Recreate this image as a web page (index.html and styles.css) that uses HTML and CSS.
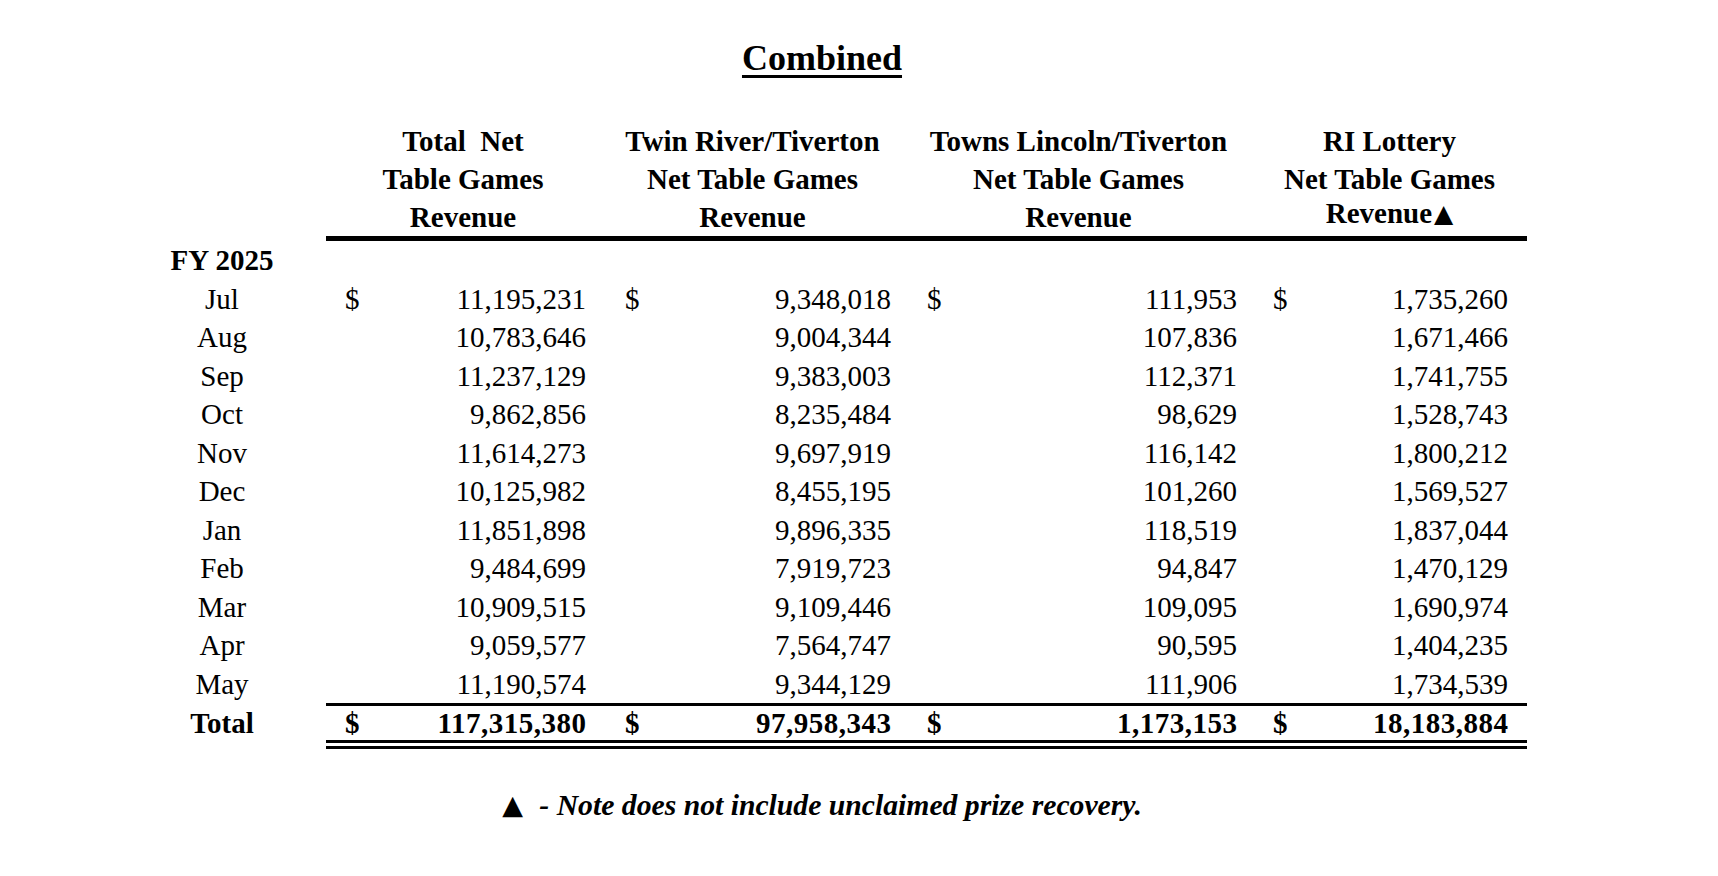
FILE: index.html
```html
<!DOCTYPE html>
<html lang="en">
<head>
<meta charset="utf-8">
<title>Combined</title>
<link rel="stylesheet" href="styles.css">
</head>
<body>
<div class="page">
  <h1 class="title"><span class="title-text">Combined</span></h1>

  <div class="table">
    <div class="lbl hdr-lbl"></div>
    <div class="hdr c1"><div>Total&nbsp; Net</div><div>Table Games</div><div>Revenue</div></div>
    <div class="hdr c2"><div>Twin River/Tiverton</div><div>Net Table Games</div><div>Revenue</div></div>
    <div class="hdr c3"><div>Towns Lincoln/Tiverton</div><div>Net Table Games</div><div>Revenue</div></div>
    <div class="hdr c4"><div>RI Lottery</div><div>Net Table Games</div><div class="rev-up">Revenue<span class="tri">▲</span></div></div>

    <div class="lbl fy">FY 2025</div>
    <div class="cell c1"></div><div class="cell c2"></div><div class="cell c3"></div><div class="cell c4"></div>

    <div class="lbl">Jul</div>
    <div class="cell c1"><span class="cur">$</span><span class="num">11,195,231</span></div>
    <div class="cell c2"><span class="cur">$</span><span class="num">9,348,018</span></div>
    <div class="cell c3"><span class="cur">$</span><span class="num">111,953</span></div>
    <div class="cell c4"><span class="cur">$</span><span class="num">1,735,260</span></div>

    <div class="lbl">Aug</div>
    <div class="cell c1"><span class="num">10,783,646</span></div>
    <div class="cell c2"><span class="num">9,004,344</span></div>
    <div class="cell c3"><span class="num">107,836</span></div>
    <div class="cell c4"><span class="num">1,671,466</span></div>

    <div class="lbl">Sep</div>
    <div class="cell c1"><span class="num">11,237,129</span></div>
    <div class="cell c2"><span class="num">9,383,003</span></div>
    <div class="cell c3"><span class="num">112,371</span></div>
    <div class="cell c4"><span class="num">1,741,755</span></div>

    <div class="lbl">Oct</div>
    <div class="cell c1"><span class="num">9,862,856</span></div>
    <div class="cell c2"><span class="num">8,235,484</span></div>
    <div class="cell c3"><span class="num">98,629</span></div>
    <div class="cell c4"><span class="num">1,528,743</span></div>

    <div class="lbl">Nov</div>
    <div class="cell c1"><span class="num">11,614,273</span></div>
    <div class="cell c2"><span class="num">9,697,919</span></div>
    <div class="cell c3"><span class="num">116,142</span></div>
    <div class="cell c4"><span class="num">1,800,212</span></div>

    <div class="lbl">Dec</div>
    <div class="cell c1"><span class="num">10,125,982</span></div>
    <div class="cell c2"><span class="num">8,455,195</span></div>
    <div class="cell c3"><span class="num">101,260</span></div>
    <div class="cell c4"><span class="num">1,569,527</span></div>

    <div class="lbl">Jan</div>
    <div class="cell c1"><span class="num">11,851,898</span></div>
    <div class="cell c2"><span class="num">9,896,335</span></div>
    <div class="cell c3"><span class="num">118,519</span></div>
    <div class="cell c4"><span class="num">1,837,044</span></div>

    <div class="lbl">Feb</div>
    <div class="cell c1"><span class="num">9,484,699</span></div>
    <div class="cell c2"><span class="num">7,919,723</span></div>
    <div class="cell c3"><span class="num">94,847</span></div>
    <div class="cell c4"><span class="num">1,470,129</span></div>

    <div class="lbl">Mar</div>
    <div class="cell c1"><span class="num">10,909,515</span></div>
    <div class="cell c2"><span class="num">9,109,446</span></div>
    <div class="cell c3"><span class="num">109,095</span></div>
    <div class="cell c4"><span class="num">1,690,974</span></div>

    <div class="lbl">Apr</div>
    <div class="cell c1"><span class="num">9,059,577</span></div>
    <div class="cell c2"><span class="num">7,564,747</span></div>
    <div class="cell c3"><span class="num">90,595</span></div>
    <div class="cell c4"><span class="num">1,404,235</span></div>

    <div class="lbl">May</div>
    <div class="cell c1"><span class="num">11,190,574</span></div>
    <div class="cell c2"><span class="num">9,344,129</span></div>
    <div class="cell c3"><span class="num">111,906</span></div>
    <div class="cell c4"><span class="num">1,734,539</span></div>

    <div class="lbl total-lbl">Total</div>
    <div class="cell total c1"><span class="cur">$</span><span class="num">117,315,380</span></div>
    <div class="cell total c2"><span class="cur">$</span><span class="num">97,958,343</span></div>
    <div class="cell total c3"><span class="cur">$</span><span class="num">1,173,153</span></div>
    <div class="cell total c4"><span class="cur">$</span><span class="num">18,183,884</span></div>
  </div>

  <p class="note"><span class="note-tri">▲</span> <span class="note-text">- Note does not include unclaimed prize recovery.</span></p>
</div>
</body>
</html>
```

FILE: styles.css
```css
html, body {
  margin: 0;
  padding: 0;
  background: #ffffff;
}

body {
  font-family: "Liberation Serif", "Times New Roman", serif;
  color: #000000;
}

.page {
  width: 1644px;
  padding-top: 38px;
}

.title {
  margin: 0;
  text-align: center;
  font-size: 36px;
  line-height: 40px;
  font-weight: bold;
}

.title-text {
  text-decoration: underline;
  text-decoration-thickness: 3px;
  text-underline-offset: 5px;
}

.table {
  display: grid;
  grid-template-columns: 176px 274px 305px 347px 275px;
  margin-left: 150px;
  margin-top: 44px;
  font-size: 29px;
}

.lbl {
  padding-right: 32px;
  text-align: center;
  height: 38.5px;
  line-height: 38.5px;
  white-space: nowrap;
}

.hdr-lbl {
  height: auto;
}

.fy {
  font-weight: bold;
}

.hdr {
  font-weight: bold;
  text-align: center;
  line-height: 38px;
  white-space: nowrap;
  border-bottom: 5px solid #000;
}

.rev-up {
  height: 38px;
  margin-top: -4px;
  margin-bottom: 4px;
}

.tri {
  font-family: "DejaVu Sans", sans-serif;
  font-size: 25px;
  line-height: 20px;
  margin-left: 2px;
  vertical-align: 1px;
}

.cell {
  display: flex;
  align-items: center;
  height: 38.5px;
  line-height: 38.5px;
  white-space: nowrap;
}

.cur {
  flex: none;
}

.num {
  margin-left: auto;
}

.c1 { padding-left: 19px; padding-right: 14px; }
.c2 { padding-left: 25px; padding-right: 14px; }
.c3 { padding-left: 22px; padding-right: 15px; }
.c4 { padding-left: 21px; padding-right: 19px; }

.hdr.c1, .hdr.c2, .hdr.c3, .hdr.c4 {
  padding-left: 0;
  padding-right: 0;
}

.total-lbl {
  font-weight: bold;
  height: 34px;
  line-height: 34px;
  border-top: 3px solid transparent;
  border-bottom: 9px double transparent;
}

.total {
  font-weight: bold;
  height: 34px;
  line-height: 34px;
  border-top: 3px solid #000;
  border-bottom: 9px double #000;
}

.total .num {
  letter-spacing: 0.5px;
  margin-right: -0.5px;
}

.note {
  margin: 37px 0 0 0;
  text-align: center;
  font-size: 29.7px;
  line-height: 38px;
  font-weight: bold;
  font-style: italic;
  white-space: nowrap;
}

.note-tri {
  font-family: "DejaVu Sans", sans-serif;
  font-style: normal;
  font-size: 27px;
  line-height: 20px;
  vertical-align: 1px;
  margin-right: 9px;
}
```
